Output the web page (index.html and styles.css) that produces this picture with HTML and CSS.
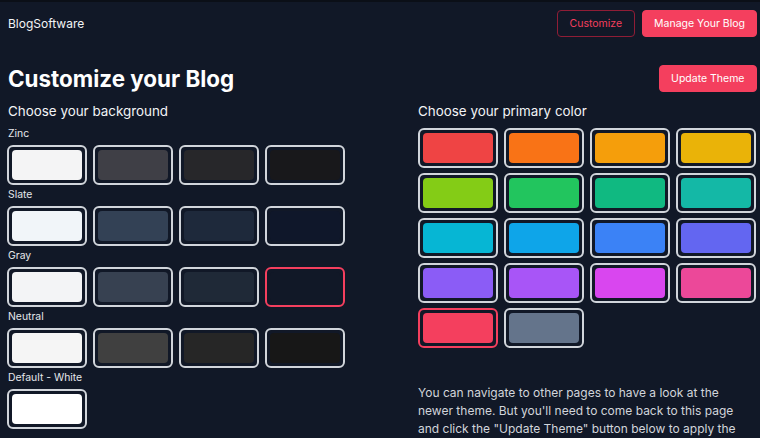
FILE: index.html
```html
<!DOCTYPE html>
<html>
<head>
<meta charset="utf-8">
<link rel="stylesheet" href="styles.css">
</head>
<body>
<header class="topbar">
  <div class="brand">BlogSoftware</div>
  <nav class="nav">
    <button class="btn btn-outline">Customize</button>
    <button class="btn btn-primary">Manage Your Blog</button>
  </nav>
</header>
<main class="page">
  <div class="title-row">
    <h1 class="title">Customize your Blog</h1>
    <button class="btn btn-primary btn-update">Update Theme</button>
  </div>
  <div class="columns">
    <section class="bg-col">
      <h2 class="section-title">Choose your background</h2>
      <div class="group-label">Zinc</div>
      <div class="swatch-row">
        <div class="swatch"><div class="fill" style="background:#f4f4f5"></div></div>
        <div class="swatch"><div class="fill" style="background:#3f3f46"></div></div>
        <div class="swatch"><div class="fill" style="background:#27272a"></div></div>
        <div class="swatch"><div class="fill" style="background:#18181b"></div></div>
      </div>
      <div class="group-label">Slate</div>
      <div class="swatch-row">
        <div class="swatch"><div class="fill" style="background:#f1f5f9"></div></div>
        <div class="swatch"><div class="fill" style="background:#334155"></div></div>
        <div class="swatch"><div class="fill" style="background:#1e293b"></div></div>
        <div class="swatch"><div class="fill" style="background:#0f172a"></div></div>
      </div>
      <div class="group-label">Gray</div>
      <div class="swatch-row">
        <div class="swatch"><div class="fill" style="background:#f3f4f6"></div></div>
        <div class="swatch"><div class="fill" style="background:#374151"></div></div>
        <div class="swatch"><div class="fill" style="background:#1f2937"></div></div>
        <div class="swatch selected"><div class="fill" style="background:#111827"></div></div>
      </div>
      <div class="group-label">Neutral</div>
      <div class="swatch-row">
        <div class="swatch"><div class="fill" style="background:#f5f5f5"></div></div>
        <div class="swatch"><div class="fill" style="background:#404040"></div></div>
        <div class="swatch"><div class="fill" style="background:#262626"></div></div>
        <div class="swatch"><div class="fill" style="background:#171717"></div></div>
      </div>
      <div class="group-label">Default - White</div>
      <div class="swatch-row">
        <div class="swatch"><div class="fill" style="background:#ffffff"></div></div>
      </div>
    </section>
    <section class="color-col">
      <h2 class="section-title">Choose your primary color</h2>
      <div class="color-grid">
        <div class="swatch"><div class="fill" style="background:#ef4444"></div></div>
        <div class="swatch"><div class="fill" style="background:#f97316"></div></div>
        <div class="swatch"><div class="fill" style="background:#f59e0b"></div></div>
        <div class="swatch"><div class="fill" style="background:#eab308"></div></div>
        <div class="swatch"><div class="fill" style="background:#84cc16"></div></div>
        <div class="swatch"><div class="fill" style="background:#22c55e"></div></div>
        <div class="swatch"><div class="fill" style="background:#10b981"></div></div>
        <div class="swatch"><div class="fill" style="background:#14b8a6"></div></div>
        <div class="swatch"><div class="fill" style="background:#06b6d4"></div></div>
        <div class="swatch"><div class="fill" style="background:#0ea5e9"></div></div>
        <div class="swatch"><div class="fill" style="background:#3b82f6"></div></div>
        <div class="swatch"><div class="fill" style="background:#6366f1"></div></div>
        <div class="swatch"><div class="fill" style="background:#8b5cf6"></div></div>
        <div class="swatch"><div class="fill" style="background:#a855f7"></div></div>
        <div class="swatch"><div class="fill" style="background:#d946ef"></div></div>
        <div class="swatch"><div class="fill" style="background:#ec4899"></div></div>
        <div class="swatch selected"><div class="fill" style="background:#f43f5e"></div></div>
        <div class="swatch"><div class="fill" style="background:#64748b"></div></div>
      </div>
      <p class="note">You can navigate to other pages to have a look at the newer theme. But you'll need to come back to this page and click the "Update Theme" button below to apply the changes to your blog.</p>
    </section>
  </div>
</main>
</body>
</html>
```

FILE: styles.css
```css
* { box-sizing: border-box; }
html, body { margin: 0; padding: 0; }
body {
  background: #111827;
  color: #f3f4f6;
  font-family: Inter, "Noto Sans", sans-serif;
  overflow: hidden;
}
.topbar {
  border-top: 2px solid #0b0f17;
  padding: 8px 3px 10px 8px;
  display: flex;
  justify-content: space-between;
  align-items: center;
}
.brand {
  font-size: 12px;
  color: #f3f4f6;
}
.nav {
  display: flex;
  gap: 7px;
}
.btn {
  font-family: Inter, "Noto Sans", sans-serif;
  font-size: 10.5px;
  height: 27px;
  padding: 0 11px;
  border-radius: 4px;
  border: 1px solid transparent;
  cursor: pointer;
}
.btn-outline {
  background: transparent;
  color: #f43f5e;
  border-color: #8f1d36;
  padding: 0 12px;
}
.btn-primary {
  background: #f43f5e;
  color: #ffffff;
  border-color: #f43f5e;
}
.btn-update {
  padding: 0 11.5px;
}
.page {
  padding: 0 3px 0 8px;
}
.title-row {
  display: flex;
  justify-content: space-between;
  align-items: center;
  margin-top: 18px;
}
.title {
  margin: 0;
  font-size: 22.4px;
  line-height: 27px;
  font-weight: 700;
  color: #ffffff;
}
.columns {
  display: flex;
  margin-top: 9px;
}
.bg-col {
  width: 410px;
  flex: none;
}
.color-col {
  flex: 1;
}
.section-title {
  margin: 0;
  font-size: 13.4px;
  line-height: 20px;
  font-weight: 400;
  color: #f3f4f6;
}
.bg-col .section-title { margin-bottom: 6px; }
.group-label {
  font-size: 10.4px;
  line-height: 14px;
  color: #e5e7eb;
  margin: 3px 0 4px;
}
.swatch-row {
  display: flex;
  gap: 6px;
  margin-left: -1px;
}
.swatch {
  width: 80px;
  height: 40px;
  border: 2px solid #d1d5db;
  border-radius: 6px;
  padding: 3px;
  background: #111827;
}
.swatch.selected { border-color: #f43f5e; }
.fill {
  width: 100%;
  height: 100%;
  border-radius: 4px;
}
.color-grid {
  display: grid;
  grid-template-columns: repeat(4, 80px);
  grid-auto-rows: 40px;
  column-gap: 6px;
  row-gap: 5px;
  margin-top: 7px;
}
.note {
  margin: 36px 0 0;
  font-size: 12px;
  line-height: 18px;
  color: #d1d5db;
  max-width: 339px;
}
```
